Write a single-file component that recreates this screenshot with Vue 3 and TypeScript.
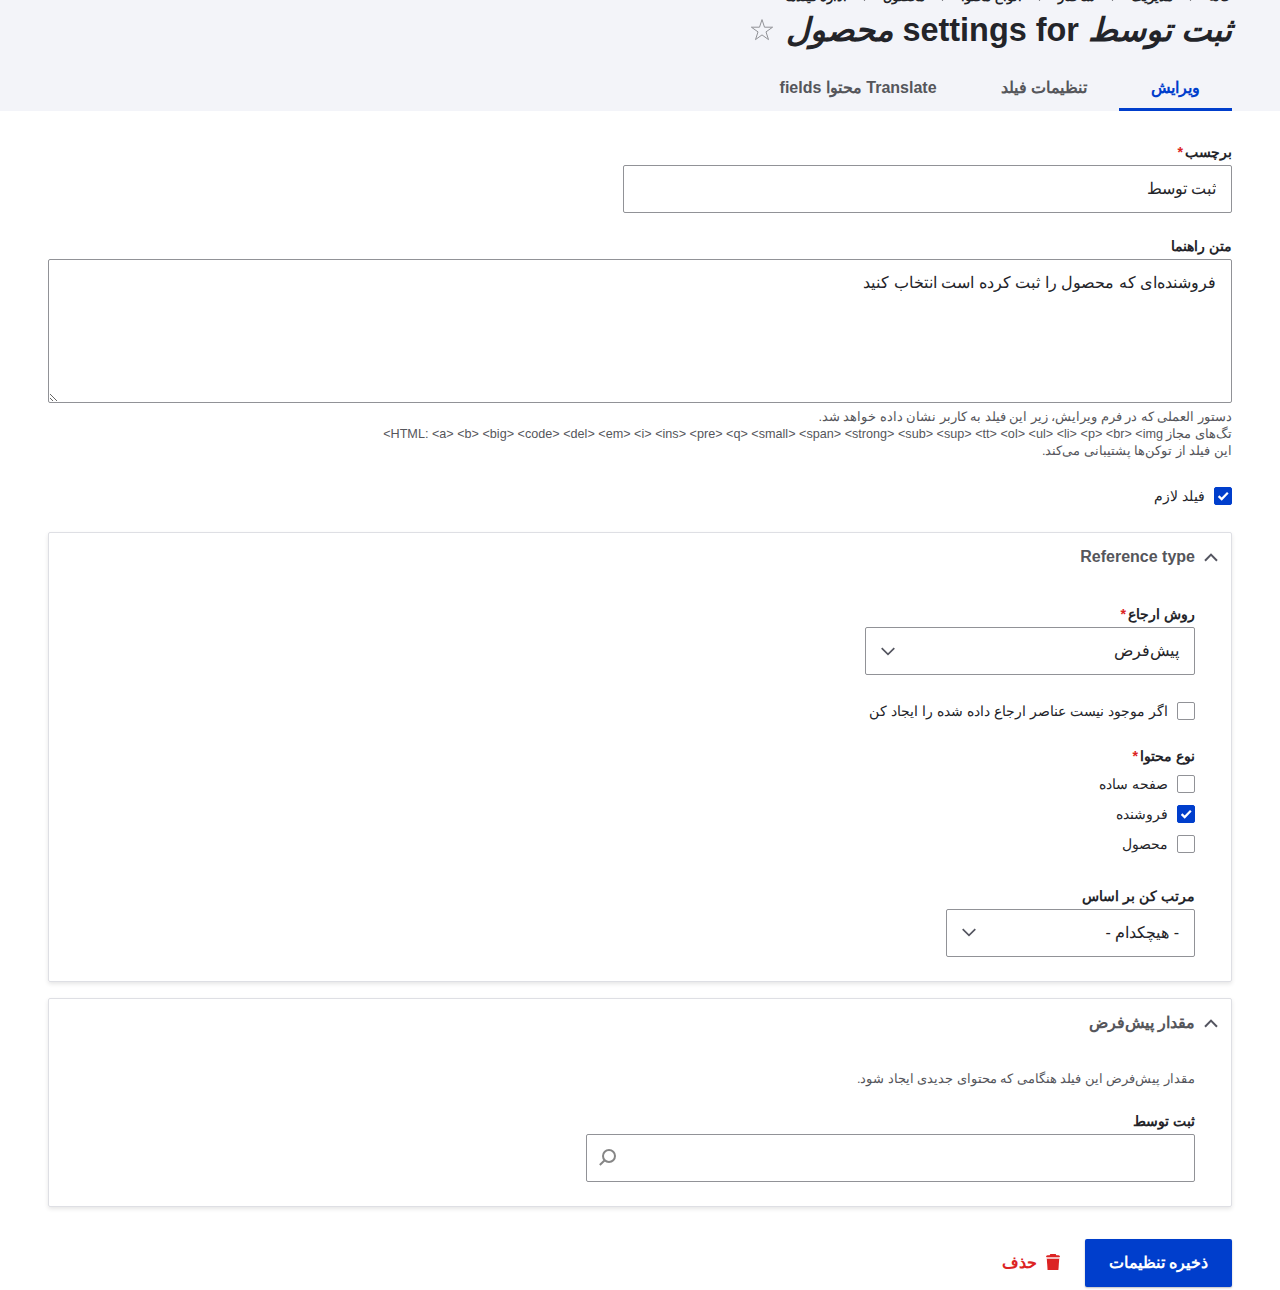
<script setup lang="ts">
import { ref } from 'vue'

const crumbs = ['خانه', 'مدیریت', 'ساختار', 'انواع محتوا', 'محصول', 'اداره فیلدها']
const tabs = ['ویرایش', 'تنظیمات فیلد', 'Translate محتوا fields']
const allowed =
  '<a> <b> <big> <code> <del> <em> <i> <ins> <pre> <q> <small> <span> <strong> <sub> <sup> <tt> <ol> <ul> <li> <p> <br> <img>'

const label = ref('ثبت توسط')
const help = ref('فروشنده‌ای که محصول را ثبت کرده است انتخاب کنید')
const required = ref(true)
const autoCreate = ref(false)
const defaultValue = ref('')
const bundles = ref([
  { name: 'صفحه ساده', checked: false },
  { name: 'فروشنده', checked: true },
  { name: 'محصول', checked: false },
])
</script>

<template>
  <div class="page" dir="rtl">
    <header class="header">
      <nav class="breadcrumb">
        <template v-for="(crumb, i) in crumbs" :key="crumb">
          <svg v-if="i" class="sep" width="5" height="8" viewBox="0 0 5 8"><path d="M4 .7.9 4 4 7.3" /></svg>
          <a>{{ crumb }}</a>
        </template>
      </nav>
      <div class="title-row">
        <h1><em>ثبت توسط</em> settings for <em>محصول</em></h1>
        <svg class="star" width="24" height="24" viewBox="0 0 24 24">
          <path d="M12 1.6 14.5 9.2H22.6L16 13.9 18.5 21.6 12 16.9 5.5 21.6 8 13.9 1.4 9.2H9.5Z" />
        </svg>
      </div>
      <nav class="tabs">
        <a v-for="(tab, i) in tabs" :key="tab" class="tab" :class="{ active: i === 0 }">{{ tab }}</a>
      </nav>
    </header>

    <main class="content">
      <label class="label">برچسب<span class="star-req">*</span></label>
      <input v-model="label" class="field text" type="text" />

      <label class="label help-label">متن راهنما</label>
      <textarea v-model="help" class="field area"></textarea>
      <div class="description">
        دستور العملی که در فرم ویرایش، زیر این فیلد به کاربر نشان داده خواهد شد.<br />
        تگ‌های مجاز HTML: {{ allowed }}<br />
        این فیلد از توکن‌ها پشتیبانی می‌کند.
      </div>

      <label class="check required-check">
        <input v-model="required" type="checkbox" class="box" /><span>فیلد لازم</span>
      </label>

      <section class="details reference">
        <div class="summary">
          <svg width="14" height="9" viewBox="0 0 14 9"><path d="M1 7.7 7 1.6 13 7.7" /></svg>
          <span>Reference type</span>
        </div>
        <div class="body">
          <label class="label">روش ارجاع<span class="star-req">*</span></label>
          <div class="field select method">
            <span>پیش‌فرض</span>
            <svg width="14" height="9" viewBox="0 0 14 9"><path d="M.7 1.2 7 7.4 13.3 1.2" /></svg>
          </div>
          <label class="check create-check">
            <input v-model="autoCreate" type="checkbox" class="box" />
            <span>اگر موجود نیست عناصر ارجاع داده شده را ایجاد کن</span>
          </label>
          <div class="label bundle-label">نوع محتوا<span class="star-req">*</span></div>
          <div class="bundles">
            <label v-for="b in bundles" :key="b.name" class="check">
              <input v-model="b.checked" type="checkbox" class="box" /><span>{{ b.name }}</span>
            </label>
          </div>
          <label class="label sort-label">مرتب کن بر اساس</label>
          <div class="field select sort">
            <span>- هیچکدام -</span>
            <svg width="14" height="9" viewBox="0 0 14 9"><path d="M.7 1.2 7 7.4 13.3 1.2" /></svg>
          </div>
        </div>
      </section>

      <section class="details defaults">
        <div class="summary">
          <svg width="14" height="9" viewBox="0 0 14 9"><path d="M1 7.7 7 1.6 13 7.7" /></svg>
          <span>مقدار پیش‌فرض</span>
        </div>
        <div class="body">
          <div class="description default-note">مقدار پیش‌فرض این فیلد هنگامی که محتوای جدیدی ایجاد شود.</div>
          <label class="label author-label">ثبت توسط</label>
          <div class="field search">
            <input v-model="defaultValue" type="text" />
            <svg width="18" height="18" viewBox="0 0 18 18"><circle cx="11" cy="7" r="6" /><path d="M6.7 11.2 1.8 16" /></svg>
          </div>
        </div>
      </section>

      <div class="actions">
        <button class="save">ذخیره تنظیمات</button>
        <a class="delete">
          <svg width="14" height="16" viewBox="0 0 14 16">
            <path d="M4.3 0H9.7L10.3 1.2H12.5Q14 1.4 14 2.9H0Q0 1.4 1.5 1.2H3.7Z" /><path d="M.8 5H13.2L12.4 16H1.6Z" /><path class="band" d="M.5 2.9H13.5V5H.6Z" />
          </svg>
          <span>حذف</span>
        </a>
      </div>
    </main>
  </div>
</template>

<style>
body {
  overflow: hidden;
  background: #fff;
}
</style>

<style scoped>
* {
  box-sizing: border-box;
}
.page {
  height: 1290px;
  overflow: hidden;
  color: #232429;
  font: 16px/24px "Liberation Sans", sans-serif;
}
svg {
  display: block;
  flex: none;
  fill: none;
}
.header {
  height: 111px;
  padding: 0 48px;
  background: #f3f4f9;
  overflow: hidden;
}
.breadcrumb {
  display: flex;
  align-items: center;
  height: 16px;
  margin-top: -11px;
  font-size: 12.64px;
  line-height: 16px;
  font-weight: 700;
}
.sep {
  margin: 0 17px 0 14px;
  stroke: #232429;
  stroke-width: 1.5;
}
.title-row {
  display: flex;
  align-items: center;
  height: 42px;
  margin-top: 4px;
}
h1 {
  margin: 0;
  font-size: 32.44px;
  line-height: 42px;
  font-weight: 700;
  white-space: nowrap;
}
.star {
  margin-right: 12px;
  stroke: #919297;
  stroke-width: 1;
}
.tabs {
  display: flex;
  height: 46px;
  margin-top: 14px;
}
.tab {
  padding: 11px 32px 0;
  border-bottom: 3px solid transparent;
  color: #55565b;
  font-weight: 700;
}
.tab.active {
  color: #003ecc;
  border-color: #003ecc;
}
.content {
  padding: 32px 48px 0;
}
.label {
  display: block;
  height: 18px;
  margin: 0 0 4px;
  font-size: 14.22px;
  line-height: 18px;
  font-weight: 700;
}
.star-req {
  margin-right: 2px;
  color: #dc2323;
}
.field {
  display: block;
  border: 1px solid #919297;
  border-radius: 2px;
  background: #fff;
  color: #232429;
  font: inherit;
  outline: none;
}
.text {
  width: 609px;
  height: 48px;
  padding: 0 15px 2px;
}
.help-label {
  margin-top: 24px;
}
.area {
  width: 100%;
  height: 144px;
  padding: 11px 15px;
  resize: vertical;
}
.description {
  margin-top: 6px;
  font-size: 12.64px;
  line-height: 17px;
  color: #55565b;
}
.check {
  display: flex;
  align-items: center;
  gap: 9px;
  height: 18px;
  font-size: 14.22px;
  line-height: 18px;
}
.box {
  flex: none;
  appearance: none;
  width: 18px;
  height: 18px;
  margin: 0;
  border: 1px solid #919297;
  border-radius: 2px;
  background: #fff;
}
.box:checked {
  border-color: #003ecc;
  background: #003ecc url("data:image/svg+xml,%3Csvg xmlns='http://www.w3.org/2000/svg' viewBox='0 0 16 16'%3E%3Cpath d='M3.6 8.1 6.7 11.1 12.8 4.8' fill='none' stroke='%23fff' stroke-width='2.2'/%3E%3C/svg%3E") center / 16px no-repeat;
}
.required-check {
  margin-top: 27px;
}
.details {
  border: 1px solid #dedfe4;
  border-radius: 2px;
  box-shadow: 0 2px 4px rgba(0, 0, 0, 0.1);
}
.reference {
  height: 450px;
  margin-top: 27px;
}
.defaults {
  height: 209px;
  margin-top: 16px;
}
.summary {
  display: flex;
  align-items: center;
  gap: 9px;
  height: 48px;
  padding-right: 13px;
  color: #55565b;
  font-weight: 700;
}
.summary svg {
  stroke: #545560;
  stroke-width: 2;
}
.select svg {
  stroke: #545560;
  stroke-width: 1.7;
}
.body {
  padding: 24px 36px 0;
}
.select {
  display: flex;
  align-items: center;
  justify-content: space-between;
  height: 48px;
  padding: 0 15px;
}
.method {
  width: 330px;
}
.sort {
  width: 249px;
}
.sort svg {
  margin-bottom: 2px;
}
.create-check {
  margin-top: 27px;
}
.bundle-label {
  margin: 27px 0 10px;
}
.bundles {
  display: flex;
  flex-direction: column;
  gap: 12px;
}
.sort-label {
  margin-top: 34px;
}
.default-note {
  margin-top: 0;
}
.author-label {
  margin-top: 24px;
}
.search {
  display: flex;
  align-items: center;
  width: 609px;
  height: 48px;
  padding: 0 15px 0 11px;
}
.search input {
  flex: 1;
  border: 0;
  outline: none;
  font: inherit;
  background: transparent;
}
.search svg {
  stroke: #868686;
  stroke-width: 2;
}
.actions {
  display: flex;
  align-items: center;
  margin-top: 32px;
}
.save {
  width: 147px;
  height: 48px;
  padding: 0;
  border: 0;
  border-radius: 2px;
  background: #003ecc;
  color: #fff;
  font: 700 16px/24px "Liberation Sans", sans-serif;
  box-shadow: 0 1px 2px rgba(0, 0, 0, 0.25);
}
.delete {
  display: flex;
  align-items: center;
  gap: 9px;
  margin-right: 25px;
  color: #dc2323;
  font-weight: 700;
}
.delete svg {
  margin-top: -2px;
  fill: #dc2323;
}
.delete .band {
  fill: #f5bcbc;
}
</style>
